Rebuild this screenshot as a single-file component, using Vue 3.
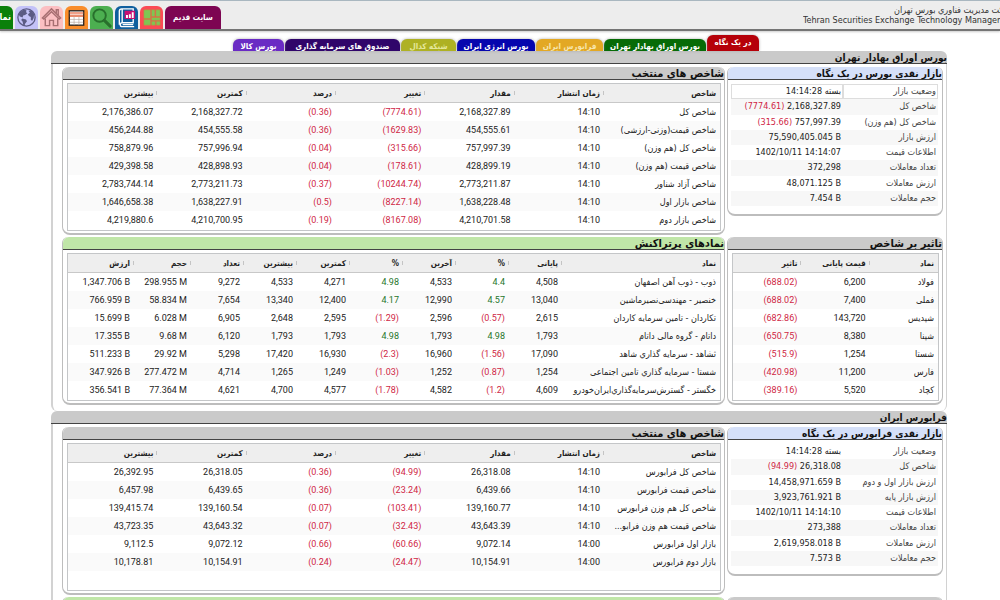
<script setup>
const tabs = [
  { label: 'در یک نگاه', kind: 'glance' },
  { label: 'بورس اوراق بهادار تهران', kind: 'tehran' },
  { label: 'فرابورس ایران', kind: 'fara' },
  { label: 'بورس انرژی ایران', kind: 'energy' },
  { label: 'شبکه کدال', kind: 'codal' },
  { label: 'صندوق های سرمایه گذاری', kind: 'funds' },
  { label: 'بورس کالا', kind: 'goods' }
]

const indexHead = ['شاخص', 'زمان انتشار', 'مقدار', 'تغییر', 'درصد', 'کمترین', 'بیشترین']
const tradeHead = ['نماد', 'پایانی', '%', 'آخرین', '%', 'کمترین', 'بیشترین', 'تعداد', 'حجم', 'ارزش']
const effectHead = ['نماد', 'قیمت پایانی', 'تاثیر']

const sections = [
  {
    title: 'بورس اوراق بهادار تهران',
    rows: [
      {
        side: {
          title: 'بازار نقدی بورس در یک نگاه', tone: 'blue', kind: 'info', boxed: true,
          items: [
            { label: 'وضعیت بازار', text: 'بسته', value: '14:14:28' },
            { label: 'شاخص کل', value: '2,168,327.89', change: '(7774.61)' },
            { label: 'شاخص کل (هم وزن)', value: '757,997.39', change: '(315.66)' },
            { label: 'ارزش بازار', value: '75,590,405.045 B' },
            { label: 'اطلاعات قیمت', value: '1402/10/11 14:14:07' },
            { label: 'تعداد معاملات', value: '372,298' },
            { label: 'ارزش معاملات', value: '48,071.125 B' },
            { label: 'حجم معاملات', value: '7.454 B' }
          ]
        },
        main: {
          title: 'شاخص های منتخب', tone: 'gray', kind: 'index', head: indexHead,
          rows: [
            ['شاخص کل', '14:10', '2,168,327.89', '(7774.61)', '(0.36)', '2,168,327.72', '2,176,386.07'],
            ['شاخص قیمت(وزنی-ارزشی)', '14:10', '454,555.61', '(1629.83)', '(0.36)', '454,555.58', '456,244.88'],
            ['شاخص کل (هم وزن)', '14:10', '757,997.39', '(315.66)', '(0.04)', '757,996.94', '758,879.96'],
            ['شاخص قیمت (هم وزن)', '14:10', '428,899.19', '(178.61)', '(0.04)', '428,898.93', '429,398.58'],
            ['شاخص آزاد شناور', '14:10', '2,773,211.87', '(10244.74)', '(0.37)', '2,773,211.73', '2,783,744.14'],
            ['شاخص بازار اول', '14:10', '1,638,228.48', '(8227.14)', '(0.5)', '1,638,227.91', '1,646,658.38'],
            ['شاخص بازار دوم', '14:10', '4,210,701.58', '(8167.08)', '(0.19)', '4,210,700.95', '4,219,880.6']
          ]
        }
      },
      {
        side: {
          title: 'تاثیر بر شاخص', tone: 'gray', kind: 'effect', head: effectHead,
          rows: [
            ['فولاد', '6,200', '(688.02)'],
            ['فملی', '7,400', '(688.02)'],
            ['شپدیس', '143,720', '(682.86)'],
            ['شپنا', '8,380', '(650.75)'],
            ['شستا', '1,254', '(515.9)'],
            ['فارس', '11,200', '(420.98)'],
            ['کچاد', '5,520', '(389.16)']
          ]
        },
        main: {
          title: 'نمادهای پرتراکنش', tone: 'green', kind: 'trade', head: tradeHead,
          rows: [
            ['ذوب - ذوب آهن اصفهان', '4,508', '4.4', '4,533', '4.98', '4,271', '4,533', '9,272', '298.955 M', '1,347.706 B'],
            ['خنصیر - مهندسی‌نصیرماشین', '13,040', '4.57', '12,990', '4.17', '12,400', '13,340', '7,654', '58.834 M', '766.959 B'],
            ['تکاردان - تامین سرمایه کاردان', '2,615', '(0.57)', '2,596', '(1.29)', '2,595', '2,648', '6,905', '6.028 M', '15.699 B'],
            ['داتام - گروه مالی داتام', '1,793', '4.98', '1,793', '4.98', '1,793', '1,793', '6,120', '9.68 M', '17.355 B'],
            ['ثشاهد - سرمایه گذاري شاهد', '17,090', '(1.56)', '16,960', '(2.3)', '16,930', '17,420', '5,298', '29.92 M', '511.233 B'],
            ['شستا - سرمایه گذاري تامین اجتماعی', '1,254', '(0.87)', '1,252', '(1.03)', '1,249', '1,265', '4,714', '277.472 M', '347.926 B'],
            ['خگستر - گسترش‌سرمایه‌گذاري‌ایران‌خودرو', '4,609', '(1.2)', '4,582', '(1.78)', '4,577', '4,700', '4,621', '77.364 M', '356.541 B']
          ]
        }
      }
    ]
  },
  {
    title: 'فرابورس ایران',
    rows: [
      {
        side: {
          title: 'بازار نقدی فرابورس در یک نگاه', tone: 'blue', kind: 'info',
          items: [
            { label: 'وضعیت بازار', text: 'بسته', value: '14:14:28' },
            { label: 'شاخص کل', value: '26,318.08', change: '(94.99)' },
            { label: 'ارزش بازار اول و دوم', value: '14,458,971.659 B' },
            { label: 'ارزش بازار پایه', value: '3,923,761.921 B' },
            { label: 'اطلاعات قیمت', value: '1402/10/11 14:14:10' },
            { label: 'تعداد معاملات', value: '273,388' },
            { label: 'ارزش معاملات', value: '2,619,958.018 B' },
            { label: 'حجم معاملات', value: '7.573 B' }
          ]
        },
        main: {
          title: 'شاخص های منتخب', tone: 'gray', kind: 'index', head: indexHead,
          rows: [
            ['شاخص کل فرابورس', '14:10', '26,318.08', '(94.99)', '(0.36)', '26,318.05', '26,392.95'],
            ['شاخص قیمت فرابورس', '14:10', '6,439.66', '(23.24)', '(0.36)', '6,439.65', '6,457.98'],
            ['شاخص کل هم وزن فرابورس', '14:10', '139,160.77', '(103.41)', '(0.07)', '139,160.54', '139,415.74'],
            ['شاخص قیمت هم وزن فرابو...', '14:10', '43,643.39', '(32.43)', '(0.07)', '43,643.32', '43,723.35'],
            ['بازار اول فرابورس', '14:00', '9,072.14', '(60.66)', '(0.66)', '9,072.12', '9,112.5'],
            ['بازار دوم فرابورس', '14:00', '10,154.91', '(24.47)', '(0.24)', '10,154.91', '10,178.81']
          ]
        }
      },
      {
        side: { title: '', tone: 'gray', kind: 'effect', head: [], rows: [] },
        main: { title: '', tone: 'green', kind: 'trade', head: [], rows: [] }
      }
    ]
  }
]

const panelsOf = (row) => [row.side, row.main]

function cellTone(panel, text, col) {
  if (text.startsWith('(')) return 'down'
  if (panel.kind === 'trade' && (col === 2 || col === 4)) return 'up'
  return ''
}
</script>

<template>
  <div class="page">
    <header class="top">
      <nav class="tools">
        <a href="#" class="tool map-view"><span>نمای</span></a>
        <a href="#" class="tool globe" aria-label="globe">
          <svg viewBox="0 0 24 24">
            <circle cx="12" cy="12" r="9" fill="none" stroke="#5b5b84" stroke-width="1.4" />
            <path d="M5 6.500 9 4l3 .5-.5 2 1.500 1-2.500 2-2 .5-.5 2-3-1-1-2zM7.500 13l4 1 1 2-2 2.500-.5 2-1.500-1-.5-3-1.500-2zM14 5l3-.5 3 4-.5 4-1.500 3-1.500-1v-3l-2-1-1-2 2-1.500z" fill="#5b5b84" />
          </svg>
        </a>
        <a href="#" class="tool home" aria-label="home">
          <svg viewBox="0 0 24 24" fill="none" stroke="#a86f72" stroke-width="1.500">
            <path d="M2.500 12.500 12 3l9.500 9.500-1.500 1.200L12 6l-8 7.700z" />
            <path d="M5.500 13v7.500h4.500V15h4v5.500h4.500V13M17 7.500V4h2v5.500" />
          </svg>
        </a>
        <a href="#" class="tool sheet" aria-label="table">
          <svg viewBox="0 0 24 24">
            <rect x="4.500" y="5" width="15" height="15" fill="#fff" stroke="#2b2420" stroke-width="1.400" />
            <path d="M5 7.500h14" stroke="#f0a088" stroke-width="2.500" />
            <path d="M5 10.500h14" stroke="#e2643c" stroke-width="1.500" />
            <path d="M5 14h14M5 17h14M9.500 11v9M14.500 11v9" stroke="#b8aaa2" stroke-width=".7" />
          </svg>
        </a>
        <a href="#" class="tool find" aria-label="search">
          <svg viewBox="0 0 24 24" fill="none" stroke="#28702c">
            <circle cx="10" cy="10" r="6.500" stroke-width="2" />
            <path d="m15 15 6 6" stroke-width="3.200" stroke-linecap="round" />
          </svg>
        </a>
        <a href="#" class="tool book" aria-label="book">
          <svg viewBox="0 0 24 24">
            <path d="M7 3h12v14.500H7.500a2 2 0 0 0 0 4H20M19 19.500H8M7 3Q4.500 3 4.500 5.500v14M7.500 3v14" fill="none" stroke="#fff" stroke-width="1.400" />
            <path d="M10 5h11v8.500H10z" fill="#c70f72" />
            <path d="M12.500 12.500v-3M15.500 12.500V8.500M18.500 12.500V6.500" stroke="#fff" stroke-width="2" />
          </svg>
        </a>
        <a href="#" class="tool tree" aria-label="market map">
          <svg viewBox="0 0 24 24" fill="#7fc653" stroke="#c58a3d" stroke-width=".5">
            <path d="M4 4h7v9H4zM12 4h3.500v7H12zM16.500 4H21v7h-4.500zM4 14h7v6H4zM12 12h9v3h-9zM12 16h4v4h-4zM17 16h4v4h-4z" />
          </svg>
        </a>
        <a href="#" class="tool old-site"><span>سایت قدیم</span></a>
      </nav>
      <div class="brand">
        <div class="brand-fa">شرکت مدیریت فناوري بورس تهران</div>
        <div class="brand-en">Tehran Securities Exchange Technology Management Co.</div>
      </div>
    </header>

    <nav class="tabs">
      <a v-for="t in tabs" :key="t.kind" href="#" class="tab" :class="t.kind">{{ t.label }}</a>
    </nav>

    <main class="content">
      <section v-for="s in sections" :key="s.title" class="section">
        <h1 class="section-title">{{ s.title }}</h1>
        <div class="section-body">
          <div v-for="(row, r) in s.rows" :key="r" class="panel-row">
            <article v-for="p in panelsOf(row)" :key="p.kind" class="panel" :class="'panel-' + p.kind">
              <h2 class="panel-title" :class="p.tone">{{ p.title }}</h2>
              <table v-if="p.kind === 'info'" class="info" :class="{ boxed: p.boxed }">
                <tbody>
                  <tr v-for="i in p.items" :key="i.label">
                    <th scope="row">{{ i.label }}</th>
                    <td>
                      <template v-if="i.text">{{ i.text }}&nbsp;</template><bdi dir="ltr">{{ i.value }}</bdi><template v-if="i.change">&nbsp;<bdi dir="ltr" class="down">{{ i.change }}</bdi></template>
                    </td>
                  </tr>
                </tbody>
              </table>
              <div v-else class="frame">
                <table class="grid" :class="p.kind">
                  <thead>
                    <tr><th v-for="(h, c) in p.head" :key="c" scope="col">{{ h }}</th></tr>
                  </thead>
                  <tbody>
                    <tr v-for="(line, n) in p.rows" :key="n">
                      <td v-for="(v, c) in line" :key="c" :class="[c ? 'num' : 'name', cellTone(p, v, c)]">{{ v }}</td>
                    </tr>
                  </tbody>
                </table>
              </div>
            </article>
          </div>
        </div>
      </section>
    </main>
  </div>
</template>

<style>
body {
  margin: 0;
  background: #fff;
}
</style>

<style scoped>
.page {
  height: 100vh;
  overflow: hidden;
  direction: rtl;
  background: #fff;
  color: #222;
  font-family: "DejaVu Sans Condensed", "DejaVu Sans", sans-serif;
  font-size: 9px;
}
a {
  text-decoration: none;
}
.top {
  box-sizing: border-box;
  height: 31px;
  display: flex;
  direction: ltr;
  justify-content: space-between;
  border-top: 1px solid #a9b7c0;
  border-bottom: 2px solid #757575;
  background: #ededed;
  box-shadow: 0 1px 2px #ccc;
}
.tools {
  display: flex;
  align-items: flex-end;
  gap: 2px;
}
.tool {
  width: 23px;
  height: 23px;
  border-radius: 6px 6px 0 0;
  overflow: hidden;
  direction: rtl;
  color: #fff;
  font-size: 8px;
  font-weight: bold;
  line-height: 23px;
  white-space: nowrap;
}
.tool svg {
  display: block;
  width: 23px;
  height: 23px;
}
.map-view {
  box-sizing: border-box;
  width: 13px;
  padding-right: 2px;
  border-radius: 0 6px 0 0;
  background: #0a800a;
  font-size: 9px;
}
.globe { background: #c3c2f8; }
.home { background: #fbbfc2; }
.sheet { background: #f98d2b; }
.find { background: #4caf50; }
.book { background: #0f5f9e; }
.tree { background: #fb4b55; }
.old-site {
  width: 56px;
  background: #7d0552;
  text-align: center;
}
.brand {
  width: 197px;
  overflow: hidden;
  padding-top: 4px;
  color: #333;
  line-height: 10px;
  white-space: nowrap;
}
.brand-fa {
  padding-left: 91px;
  direction: ltr;
}
.tabs {
  display: flex;
  align-items: flex-end;
  gap: 1px;
  height: 20px;
  padding-right: 241px;
}
.tab {
  box-sizing: border-box;
  height: 12px;
  border-radius: 6px 6px 0 0;
  overflow: hidden;
  color: #fff;
  font-size: 8px;
  font-weight: bold;
  line-height: 15px;
  text-align: center;
  white-space: nowrap;
  box-shadow: 0 0 3px #aaa;
}
.tab.glance {
  width: 52px;
  height: 16px;
  background: #b50009;
}
.tab.tehran { width: 102px; background: #076b07; }
.tab.fara { width: 67px; background: #e3a824; color: #f7e6ad; }
.tab.energy { width: 78px; background: #0606ae; }
.tab.codal { width: 55px; background: #aeb123; color: #e5e89a; }
.tab.funds { width: 115px; background: #30056a; }
.tab.goods { width: 51px; background: #6a2bc4; }
.content {
  margin: 0 53px 0 51px;
}
.section-title,
.panel-title {
  box-sizing: border-box;
  height: 13px;
  margin: 0;
  border-bottom: 1px solid #444;
  border-radius: 6px 6px 0 0;
  background: #cacaca;
  color: #111;
  font-size: 10px;
  font-weight: bold;
  line-height: 14px;
  white-space: nowrap;
}
.section-body {
  display: flex;
  flex-direction: column;
  gap: 2px;
  padding: 3px 3px 6px 9px;
  border: solid #d2d2d2;
  border-width: 0 1px 0 2px;
  border-radius: 0 0 6px 6px;
}
.panel-row {
  display: flex;
  align-items: flex-start;
  gap: 2px;
}
.panel {
  box-sizing: border-box;
  flex: 664 1 0;
  min-width: 0;
  border: solid #bdbdbd;
  border-width: 0 1px 2px;
  border-radius: 6px 6px 8px 8px;
}
.panel-info,
.panel-effect {
  flex-grow: 215;
}
.panel-title.blue { background: #d5e0f9; }
.panel-title.gray,
.panel-title.green { font-size: 11px; }
.panel-title.green { background: #c0e6a8; }
.frame {
  box-sizing: border-box;
  height: 148px;
  margin: 3px 3px 2px 4px;
  border: 1px solid #c4c6c8;
}
.grid,
.info {
  width: 100%;
  border-spacing: 0;
  border-collapse: separate;
}
.grid {
  table-layout: fixed;
}
.grid th,
.grid td {
  box-sizing: border-box;
  height: 18px;
  padding: 0 4px 0 0;
  text-align: right;
  white-space: nowrap;
}
.grid th {
  position: relative;
  height: 19px;
  border-bottom: 1px solid #c8c8c8;
  background: #eee;
  font-size: 8px;
}
.grid th + th::before {
  content: "";
  position: absolute;
  top: 7px;
  right: 0;
  width: 1px;
  height: 4px;
  background: #c4c4c4;
}
.grid tbody tr:nth-child(even) {
  background: #fafafa;
}
.grid .num {
  direction: ltr;
  font-family: Roboto, "DejaVu Sans", sans-serif;
}
.grid .down,
.down {
  color: #cf1f45;
}
.grid .up {
  color: #25752b;
}
.grid.index th:first-child { width: 116px; }
.grid.trade th { width: 53px; }
.grid.trade th:first-child { width: 158px; }
.grid.trade th:nth-child(9) { width: 57px; }
.grid.trade th:last-child { width: auto; }
.info {
  height: 122px;
  padding: 0 4px 0 3px;
  margin: 4px 0 8px;
}
.info th,
.info td {
  padding: 0 2px 0 0;
  font-weight: normal;
  line-height: 13px;
  text-align: right;
  white-space: nowrap;
}
.info th {
  width: 93px;
  color: #444;
}
.info tr:nth-child(even) > * {
  background: #f7f7f7;
}
.info.boxed tr:first-child > * {
  box-shadow: inset 0 0 0 1px #ddd;
}
</style>
